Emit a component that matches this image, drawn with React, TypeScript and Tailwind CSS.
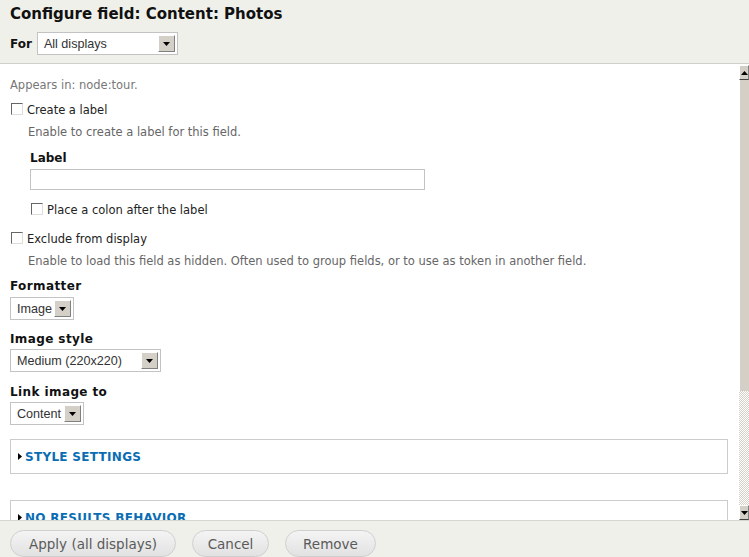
import React from 'react';

const body = { fontFamily: '"DejaVu Sans", Verdana, sans-serif' };
const arial = { fontFamily: '"Liberation Sans", Arial, sans-serif' };

function Arrow() {
  return (
    <span className="flex h-[17px] w-[17px] items-center justify-center border border-t-white border-l-white border-b-[#808080] border-r-[#808080] bg-[#d4d0c8]">
      <svg width="7" height="4" viewBox="0 0 7 4">
        <path d="M0 0h7L3.5 4z" fill="#000" />
      </svg>
    </span>
  );
}

function Select({ value, width }: { value: string; width: string }) {
  return (
    <div
      className={`flex h-[23px] items-center justify-between border border-[#c3c3c3] bg-white pl-[6px] pr-[2px] text-[12.6px] leading-[14px] text-[#333] ${width}`}
      style={arial}
    >
      <span>{value}</span>
      <Arrow />
    </div>
  );
}

function Check({ label }: { label: string }) {
  return (
    <div className="flex h-[14px] items-center gap-[4px] pl-[1px] text-[11.5px] leading-[14px] text-[#222]">
      <span className="mb-[2px] h-[12px] w-[12px] border border-t-[#666] border-l-[#666] border-b-[#ddd] border-r-[#ddd] bg-white" />
      <span>{label}</span>
    </div>
  );
}

function Fieldset({ title }: { title: string }) {
  return (
    <div className="flex h-[35px] items-center border border-[#ccc] px-[7px]">
      <svg width="4" height="7" viewBox="0 0 4 7" className="mr-[3px]">
        <path d="M0 0l4 3.5L0 7z" fill="#000" />
      </svg>
      <span className="text-[12px] font-bold leading-[14px] tracking-[0.3px] text-[#0a6db3]">{title}</span>
    </div>
  );
}

const heading = 'text-[12px] font-bold leading-[14px] tracking-[0.4px] text-[#111]';
const desc = 'pl-[18px] text-[11.5px] leading-[14px] text-[#666]';

export default function App() {
  return (
    <div className="flex h-[557px] w-[749px] flex-col overflow-hidden bg-[#f0f0eb]" style={body}>
      <header className="h-[64px] shrink-0 border-b border-[#cfcfca] px-[10px] pt-[5px]">
        <h1 className="text-[15px] font-bold leading-[18px] text-[#111]">
          Configure field: Content: Photos
        </h1>
        <div className="mt-[9px] flex items-center gap-[5px]">
          <span className="text-[12px] font-bold leading-[14px] text-[#111]">For</span>
          <Select value="All displays" width="w-[141px]" />
        </div>
      </header>

      <div className="flex min-h-0 flex-1 bg-white">
        <main className="min-w-0 flex-1 overflow-hidden pl-[10px] pr-[11px] pt-[14px]">
          <p className="text-[11.5px] leading-[14px] text-[#777]">Appears in: node:tour.</p>
          <div className="mt-[11px]">
            <Check label="Create a label" />
          </div>
          <p className={`mt-[8px] ${desc}`}>Enable to create a label for this field.</p>
          <div className="pl-[20px]">
            <div className={`mt-[12px] ${heading} tracking-normal`}>Label</div>
            <div className="mt-[4px] h-[21px] w-[395px] border border-[#c3c3c3] bg-white" />
            <div className="mt-[13px]">
              <Check label="Place a colon after the label" />
            </div>
          </div>
          <div className="mt-[15px]">
            <Check label="Exclude from display" />
          </div>
          <p className={`mt-[8px] ${desc}`}>
            Enable to load this field as hidden. Often used to group fields, or to use as token in another field.
          </p>

          <div className={`mt-[11px] ${heading}`}>Formatter</div>
          <div className="mt-[4px]">
            <Select value="Image" width="w-[64px]" />
          </div>
          <div className={`mt-[12px] ${heading}`}>Image style</div>
          <div className="mt-[3px]">
            <Select value="Medium (220x220)" width="w-[151px]" />
          </div>
          <div className={`mt-[13px] ${heading}`}>Link image to</div>
          <div className="mt-[3px]">
            <Select value="Content" width="w-[74px]" />
          </div>

          <div className="mt-[14px]">
            <Fieldset title="STYLE SETTINGS" />
          </div>
          <div className="mt-[26px]">
            <Fieldset title="NO RESULTS BEHAVIOR" />
          </div>
        </main>

        <div className="flex w-[10px] shrink-0 flex-col pt-[1px]">
          <div className="flex h-[15px] items-center border border-t-white border-l-white border-b-[#404040] border-r-[#808080] bg-[#d4d0c8] pl-[1px]">
            <svg width="7" height="4" viewBox="0 0 7 4">
              <path d="M3.5 0L7 4H0z" fill="#000" />
            </svg>
          </div>
          <div className="h-[311px] border-l border-[#fff] bg-[#d4d0c8]" />
          <div className="flex-1 bg-[repeating-conic-gradient(#d4d0c8_0_25%,#ffffff_0_50%)] bg-[length:2px_2px]" />
          <div className="flex h-[15px] items-center border border-t-white border-l-white border-b-[#404040] border-r-[#808080] bg-[#d4d0c8] pl-[1px]">
            <svg width="7" height="4" viewBox="0 0 7 4">
              <path d="M0 0h7L3.5 4z" fill="#000" />
            </svg>
          </div>
        </div>
      </div>

      <footer className="flex h-[37px] shrink-0 items-start gap-[16px] border-t border-[#d6d6d0] px-[10px] pt-[9px]">
        {['Apply (all displays)', 'Cancel', 'Remove'].map((b, i) => (
          <button
            key={b}
            className={`h-[27px] whitespace-nowrap rounded-[14px] border border-[#cfcfcf] bg-gradient-to-b from-[#f4f4f4] to-[#e2e2e2] text-[13.5px] leading-[16px] text-[#5a5a5a] ${
              i === 0 ? 'w-[166px]' : i === 1 ? 'w-[77px]' : 'w-[91px]'
            }`}
          >
            {b}
          </button>
        ))}
      </footer>
    </div>
  );
}
